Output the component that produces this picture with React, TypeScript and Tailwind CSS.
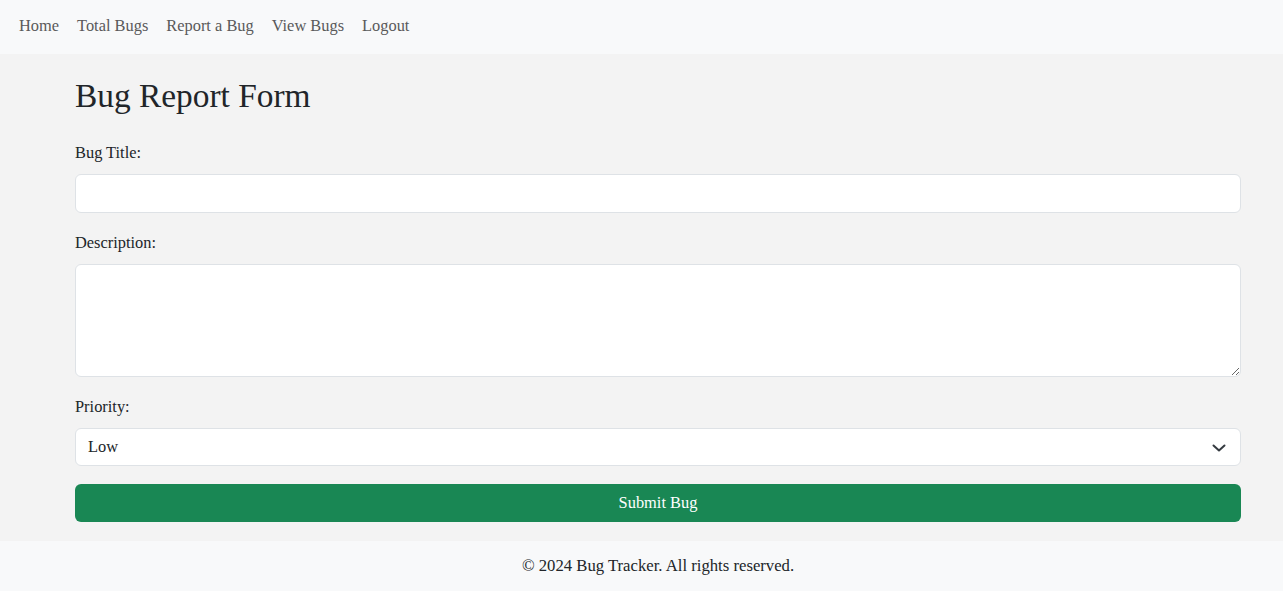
import React, { useState } from 'react';

const links = ['Home', 'Total Bugs', 'Report a Bug', 'View Bugs', 'Logout'];

const App: React.FC = () => {
  const [title, setTitle] = useState('');
  const [description, setDescription] = useState('');
  const [priority, setPriority] = useState('Low');

  return (
    <div className="min-h-[591px] flex flex-col font-['Liberation_Serif','Times_New_Roman',serif] text-[#212529] text-[16.4px]">
      {/* Navbar */}
      <nav className="h-[54px] bg-[#f8f9fa] flex items-center pl-[10px] pb-[2px]">
        {links.map((link) => (
          <a key={link} href="#" className="px-[9px] text-[#5a5a5a] leading-6">
            {link}
          </a>
        ))}
      </nav>

      {/* Main form */}
      <main className="bg-[#f3f3f3] pl-[75px] pr-[42px] pt-[22px] pb-[19px]">
        <h2 className="text-[33.4px] leading-[40px] mb-[25px]">Bug Report Form</h2>
        <form onSubmit={(e) => e.preventDefault()} className="flex flex-col">
          <label className="leading-6 mb-[9px]">Bug Title:</label>
          <input
            type="text"
            value={title}
            onChange={(e) => setTitle(e.target.value)}
            className="h-[39px] bg-white border border-[#dee2e6] rounded-[6px] px-3 outline-none mb-[18px]"
          />

          <label className="leading-6 mb-[9px]">Description:</label>
          <textarea
            value={description}
            onChange={(e) => setDescription(e.target.value)}
            className="h-[113px] bg-white border border-[#dee2e6] rounded-[6px] px-3 py-1.5 outline-none mb-[18px]"
          />

          <label className="leading-6 mb-[9px]">Priority:</label>
          <div className="relative mb-[18px]">
            <select
              value={priority}
              onChange={(e) => setPriority(e.target.value)}
              className="w-full h-[38px] appearance-none bg-white border border-[#dee2e6] rounded-[6px] pl-3 pr-10 outline-none"
            >
              <option>Low</option>
              <option>Medium</option>
              <option>High</option>
            </select>
            <svg
              className="absolute right-[15px] top-[16px] pointer-events-none"
              width="14"
              height="8"
              viewBox="0 0 14 8"
              fill="none"
              stroke="#343a40"
              strokeWidth="2"
              strokeLinecap="round"
              strokeLinejoin="round"
            >
              <path d="M1.5 1.5 7 6.5l5.5-5" />
            </svg>
          </div>

          <button
            type="submit"
            className="h-[38px] bg-[#198754] text-white rounded-[6px]"
          >
            Submit Bug
          </button>
        </form>
      </main>

      {/* Footer */}
      <footer className="h-[50px] bg-[#f8f9fa] flex items-center justify-center pl-[75px] pr-[42px]">
        <p className="text-[16.7px]">© 2024 Bug Tracker. All rights reserved.</p>
      </footer>
    </div>
  );
};

export default App;
